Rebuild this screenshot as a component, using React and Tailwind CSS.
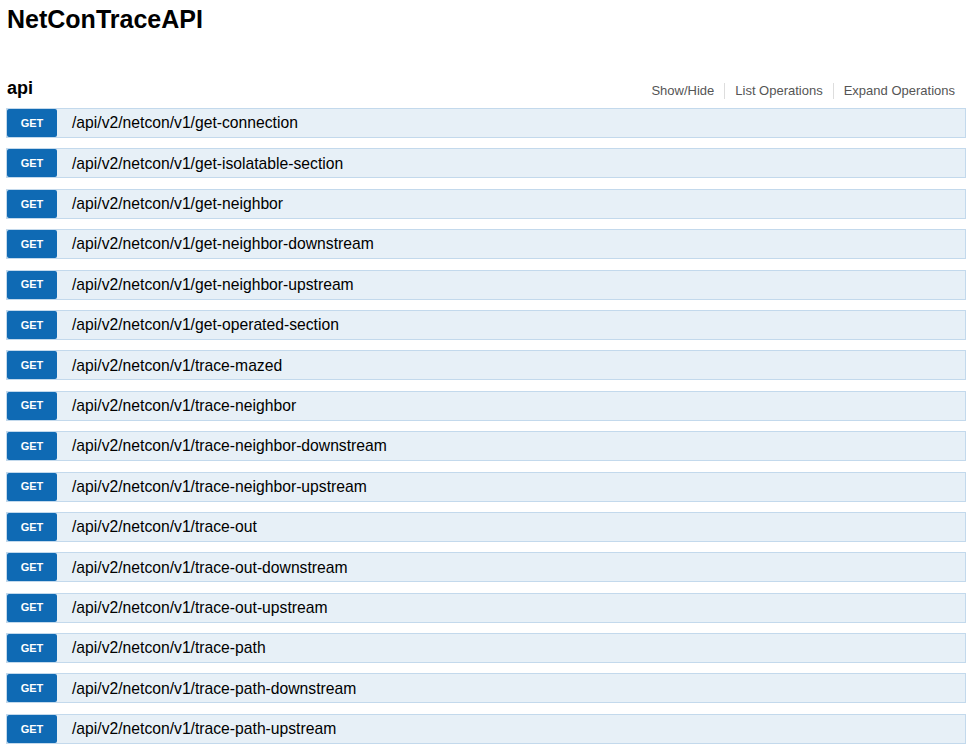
import React from 'react';

const paths = [
  'get-connection',
  'get-isolatable-section',
  'get-neighbor',
  'get-neighbor-downstream',
  'get-neighbor-upstream',
  'get-operated-section',
  'trace-mazed',
  'trace-neighbor',
  'trace-neighbor-downstream',
  'trace-neighbor-upstream',
  'trace-out',
  'trace-out-downstream',
  'trace-out-upstream',
  'trace-path',
  'trace-path-downstream',
  'trace-path-upstream',
];

export default function App() {
  return (
    <div className="min-h-screen bg-white px-[6px] font-['Liberation_Sans',Arial,sans-serif] text-[#000]">
      <h1 className="pt-[5px] pl-[1px] text-[25px] font-bold leading-[29px]">NetConTraceAPI</h1>

      <div className="mt-[43px] flex items-end justify-between pl-[1px]">
        <h2 className="text-[18px] font-bold leading-[22px]">api</h2>
        <ul className="mr-[11px] flex items-center text-[13px] leading-[16px] text-[#555]">
          <li className="pr-[10px]">Show/Hide</li>
          <li className="border-l border-[#ddd] px-[10px]">List Operations</li>
          <li className="border-l border-[#ddd] pl-[10px]">Expand Operations</li>
        </ul>
      </div>

      <ul className="mt-[9px]">
        {paths.map((p) => (
          <li key={p} className="mb-[10.4px] flex h-[30px] items-center border border-[#c3d9ec] bg-[#e7f0f7]">
            <span className="flex h-[28px] w-[50px] items-center justify-center rounded-[2px] bg-[#0f6ab4] text-[11px] font-bold text-white">
              GET
            </span>
            <span className="pl-[15px] text-[15.7px] text-[#000]">/api/v2/netcon/v1/{p}</span>
          </li>
        ))}
      </ul>
    </div>
  );
}
